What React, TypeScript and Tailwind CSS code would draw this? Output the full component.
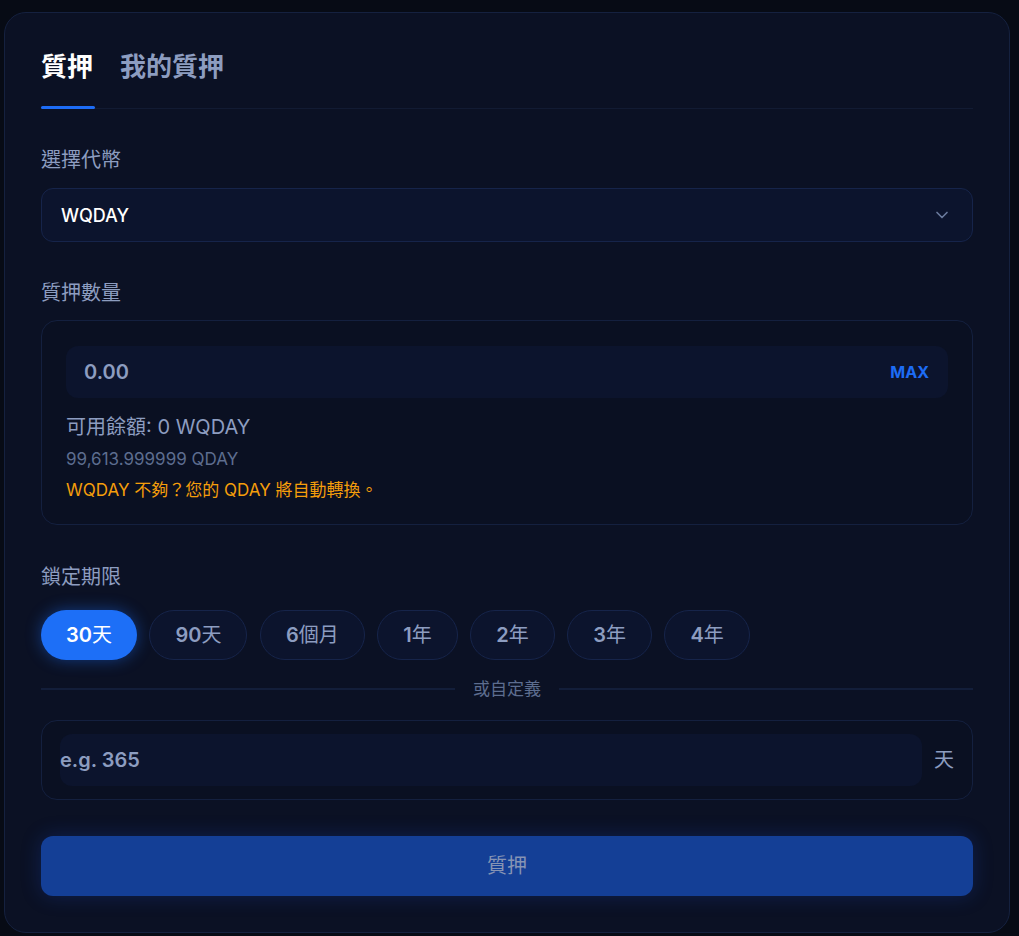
import { ChevronDown } from 'lucide-react'

const periods = [
  { n: '30', u: '天' },
  { n: '90', u: '天' },
  { n: '6', u: '個月' },
  { n: '1', u: '年' },
  { n: '2', u: '年' },
  { n: '3', u: '年' },
  { n: '4', u: '年' },
]

const font = { fontFamily: 'Inter, "Noto Sans CJK TC", sans-serif' }

export default function App() {
  return (
    <div className="min-h-screen w-full bg-[#070b15] pt-3 pl-1 pr-[9px] pb-1" style={font}>
      <div className="rounded-[22px] border border-[#15213f] bg-[#0b1124] px-9 pt-[37px] pb-9">
        {/* Tabs */}
        <div className="flex gap-[27px] border-b border-[#121b33]">
          <button className="relative pb-[24px] text-[26px] font-bold leading-[34px] text-white">
            質押
            <span className="absolute -bottom-px left-0 h-[3px] w-[54px] rounded-full bg-[#1d6cf5]" />
          </button>
          <button className="pb-[24px] text-[26px] font-bold leading-[34px] text-[#8d9dc0]">我的質押</button>
        </div>

        {/* Token */}
        <div className="mt-[37px] text-[20px] leading-[28px] text-[#8d9dc0]">選擇代幣</div>
        <div className="mt-[14px] flex h-[54px] items-center justify-between rounded-xl border border-[#16244a] bg-[#0c142d] pl-[19px] pr-5">
          <span className="text-[18px] font-medium text-white">WQDAY</span>
          <ChevronDown className="h-5 w-5 text-[#6a7a9c]" strokeWidth={2} />
        </div>

        {/* Amount */}
        <div className="mt-[37px] text-[20px] leading-[28px] text-[#8d9dc0]">質押數量</div>
        <div className="mt-[13px] rounded-2xl border border-[#14203f] bg-[#0a1022] px-6 pt-[25px] pb-[22px]">
          <div className="flex h-[52px] items-center justify-between rounded-xl bg-[#0c142d] pl-[18px] pr-[19px]">
            <span className="text-[20px] font-semibold text-[#8d9dc0]">0.00</span>
            <span className="text-[16px] font-bold text-[#1d6cf5]">MAX</span>
          </div>
          <div className="mt-[15px] text-[20px] leading-[28px] text-[#8d9dc0]">可用餘額: 0 WQDAY</div>
          <div className="mt-[6px] text-[17px] leading-[24px] text-[#5d6d8f]">99,613.999999 QDAY</div>
          <div className="mt-[7px] text-[17px] leading-[24px] text-[#f59e0b]">WQDAY 不夠？您的 QDAY 將自動轉換。</div>
        </div>

        {/* Period */}
        <div className="mt-[38px] text-[20px] leading-[28px] text-[#8d9dc0]">鎖定期限</div>
        <div className="mt-[19px] flex gap-[12.5px]">
          {periods.map((p, i) => (
            <button
              key={p.n + p.u}
              className={
                i === 0
                  ? 'h-[50px] rounded-full bg-[#1d6ff7] px-[25px] text-[20px] text-white shadow-[0_0_16px_rgba(29,111,247,0.45)]'
                  : 'h-[50px] rounded-full border border-[#16244a] bg-[#0c142d] px-[25px] text-[20px] text-[#8d9dc0]'
              }
            >
              <span className="font-semibold">{p.n}</span>
              <span className="font-normal">{p.u}</span>
            </button>
          ))}
        </div>
        <div className="mt-[16px] flex items-center gap-[18px]">
          <div className="h-[2px] flex-1 bg-[#131e3a]" />
          <span className="text-[17px] leading-[26px] text-[#5d6d8f]">或自定義</span>
          <div className="h-[2px] flex-1 bg-[#131e3a]" />
        </div>
        <div className="mt-[18px] flex h-[80px] items-center gap-3 rounded-2xl border border-[#14203f] bg-[#0a1022] pl-[18px] pr-[18px]">
          <div className="flex h-[52px] flex-1 items-center rounded-xl bg-[#0c142d]">
            <span className="text-[20px] font-semibold text-[#8d9dc0]">e.g. 365</span>
          </div>
          <span className="text-[20px] text-[#8d9dc0]">天</span>
        </div>

        <button className="mt-9 flex h-[60px] w-full items-center justify-center rounded-xl bg-[#143f96] text-[20px] text-[#8694b4] shadow-[0_0_20px_rgba(29,78,216,0.25)]">
          質押
        </button>
      </div>
    </div>
  )
}
